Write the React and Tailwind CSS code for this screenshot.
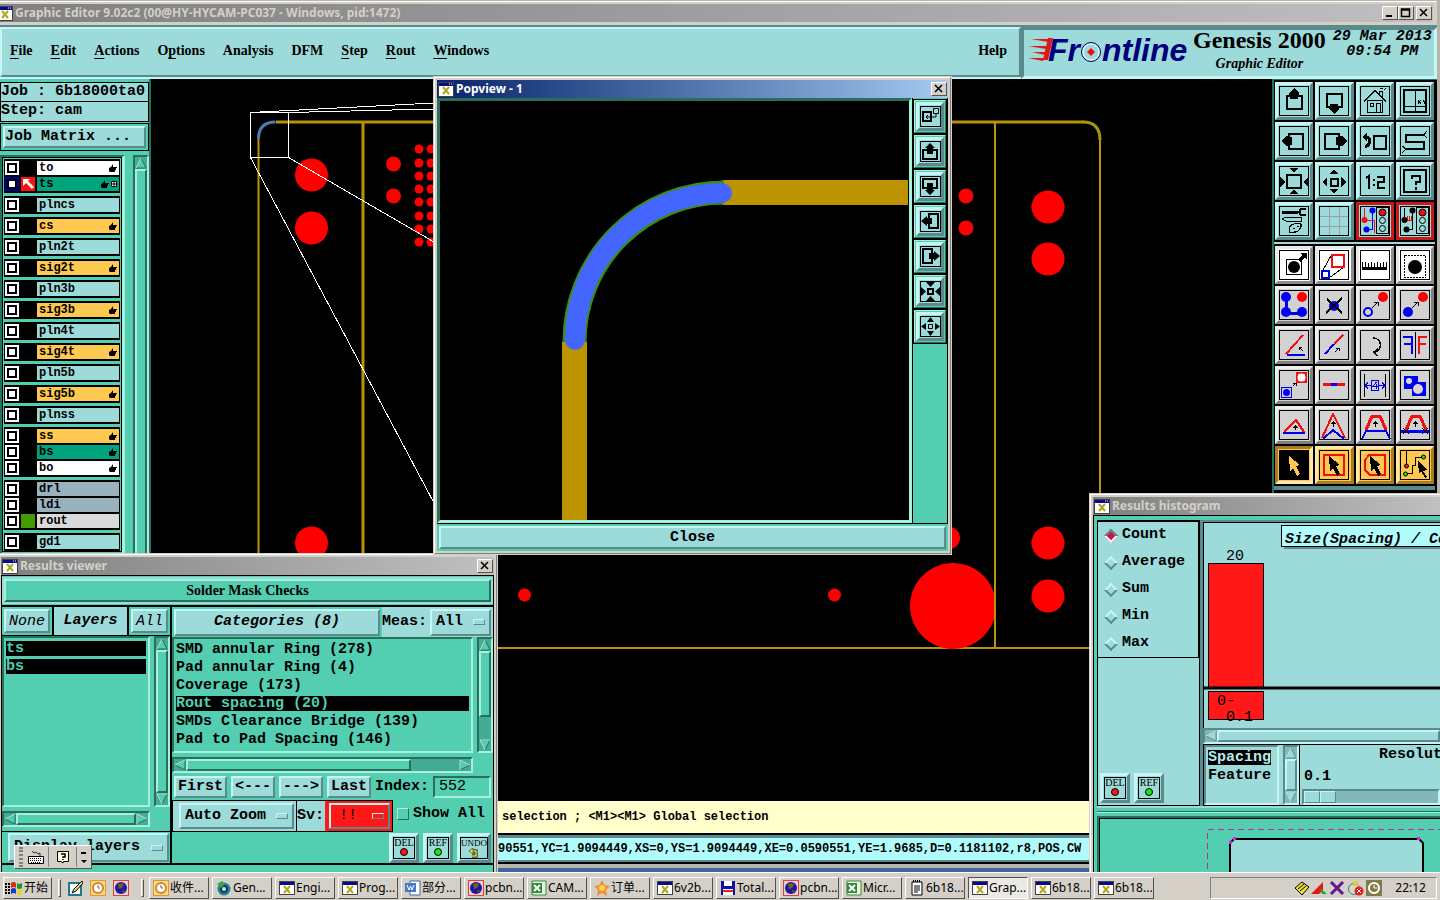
import clsx from 'clsx';

const INK = '#000';
const BLUE = '#0000f0';
const RED = '#f01010';

const raised = 'border-t-[#c6f5f5] border-l-[#c6f5f5] border-b-[#5a8a8c] border-r-[#5a8a8c]';
const raisedGreen = 'border-t-[#a8f0dc] border-l-[#a8f0dc] border-b-[#2a6e5e] border-r-[#2a6e5e]';
const sunkenGreen = 'border-t-[#2a6e5e] border-l-[#2a6e5e] border-b-[#a8f0dc] border-r-[#a8f0dc]';
const sunkenCyan = 'border-t-[#5a8a8c] border-l-[#5a8a8c] border-b-[#c6f5f5] border-r-[#c6f5f5]';
const raisedGray = 'border-t-white border-l-white border-b-[#55524c] border-r-[#55524c]';

/* ---------- toolbox drawings, all on a 38x38 grid ---------- */

const Traffic = () => (
  <g fill="none" stroke={INK}>
    <rect x="20.5" y="5.5" width="12" height="26" />
    <circle cx="26.5" cy="10.5" r="3.5" fill={RED} />
    <circle cx="26.5" cy="18.5" r="3" />
    <circle cx="26.5" cy="26.5" r="3" />
  </g>
);

const Pointer = ({ fill = INK }) => (
  <path d="M14 10l11 9-4 1 4 8-3 2-4-8-3 3z" fill={fill} />
);

const icons = {
  up: (
    <>
      <path d="M12 14h15v13h-15z" fill="none" stroke={INK} strokeWidth="2" />
      <path d="M19 6l5 5v2h-1v4h-8v-4h-1v-2z" />
    </>
  ),
  down: (
    <>
      <path d="M12 12h15v13h-15z" fill="none" stroke={INK} strokeWidth="2" />
      <path d="M19 32l5-5v-2h-1v-3h-8v3h-1v2z" />
    </>
  ),
  home: (
    <g fill="none" stroke={INK}>
      <path d="M8 19.5l2-2L19 8.5l9 9 2 2M11.5 19v11.5h15V19M11 18.5h16" strokeWidth="1.5" />
      <path d="M14.5 21.5h3v3h-3zM20.5 30v-8.5h4V30M23.5 12V9.5h3V15M24 7l3-1M28 8l2-2" />
    </g>
  ),
  xy: (
    <g fill="none" stroke={INK}>
      <path d="M8 8h22v22H8z" strokeWidth="2" />
      <path d="M19.5 8v22M8 24.5h22M22 18l3 4m0-4l-3 4M27 18l1.5 2 1.5-2M28.5 20v2" />
    </g>
  ),
  left: (
    <>
      <path d="M14 12h14v15H14z" fill="none" stroke={INK} strokeWidth="2" />
      <path d="M6 19l5-5h2v1h4v8h-4v1h-2z" />
    </>
  ),
  right: (
    <>
      <path d="M10 12h14v15H10z" fill="none" stroke={INK} strokeWidth="2" />
      <path d="M32 19l-5-5h-2v1h-4v8h4v1h2z" />
    </>
  ),
  back: (
    <g fill="none" stroke={INK}>
      <path d="M18 14h12v13H18z" strokeWidth="2" />
      <path d="M9 15c6-1 6 8 0 10" strokeWidth="3" />
      <path d="M6 15l5-4v8z" fill={INK} stroke="none" />
    </g>
  ),
  snake: (
    <g fill="none" stroke={INK}>
      <path d="M28 13H10v7h18v7H9" strokeWidth="2" />
      <path d="M28 13l3-4M28 13l3 3M10 27l-4-3M10 27l-4 4" />
    </g>
  ),
  outward: (
    <>
      <path d="M12 13h14v13H12z" fill="none" stroke={INK} strokeWidth="2" />
      <path d="M14 6h10l-5 4zM14 32h10l-5-4zM5 15v10l5-5zM33 15v10l-4-5z" />
    </>
  ),
  spread: (
    <>
      <path d="M15.5 16.5h7v7h-7z" fill="none" stroke={INK} strokeWidth="2" />
      <path d="M14 12h10l-5-4zM14 27h10l-5 4zM12 15v10l-5-5zM26 15v10l5-5z" />
    </>
  ),
  ratio: (
    <path
      d="M10 16l3-2v13M18 17v2M18 22v2M21 15h7v5h-6v6h7"
      fill="none"
      stroke={INK}
      strokeWidth="2"
    />
  ),
  help: (
    <g fill="none" stroke={INK} strokeWidth="2">
      <path d="M8 8h22v22H8z" />
      <path d="M16 17v-3h8v6h-4v3M20 25v3" />
    </g>
  ),
  tools: (
    <g fill="none" stroke={INK}>
      <path d="M7 10h16" strokeWidth="3" />
      <path d="M31 7h-5l-2 3 2 3h5" strokeWidth="2" />
      <path d="M7 17l4-2h15v4H11z" />
      <path d="M14 28c0-6 6-7 12-6 1 4-3 9-9 9-2 0-3-1-3-3z" />
      <path d="M18 26h2M22 24h2M19 29h2" />
    </g>
  ),
  grid: (
    <path d="M14.5 5v28M24.5 5v28M5 14.5h28M5 24.5h28" stroke="#a09aa8" fill="none" />
  ),
  netBlue: (
    <>
      <path d="M8.5 6v12h10v13" stroke={RED} fill="none" />
      <path d="M16.5 8v19h-6" stroke={BLUE} fill="none" />
      <circle cx="8.5" cy="18" r="3" fill={RED} />
      <circle cx="16.5" cy="8.5" r="3" fill={BLUE} />
      <circle cx="10.5" cy="27.5" r="3" fill={BLUE} />
      <Traffic />
    </>
  ),
  netBlack: (
    <>
      <path d="M8.5 6v12M16.5 8v19h-6" stroke={INK} fill="none" />
      <path d="M10 18h6M11.5 14v4M13.5 14v4M15.5 14v4" stroke={RED} fill="none" />
      <circle cx="8.5" cy="18" r="3" />
      <circle cx="16.5" cy="8.5" r="3" />
      <circle cx="10.5" cy="27.5" r="3" />
      <Traffic />
    </>
  ),
  padArrow: (
    <>
      <rect x="11.5" y="13.5" width="15" height="15" fill="none" stroke={INK} />
      <circle cx="19" cy="21" r="6" />
      <path d="M24 15l5-5" stroke={INK} strokeWidth="3" />
      <path d="M25 7h7v7z" />
    </>
  ),
  scale: (
    <g fill="none">
      <path d="M8 24l9-16M14 32l15-11" stroke={INK} />
      <path d="M17 9h12v12H17z" stroke={RED} strokeWidth="2" />
      <path d="M7 25h7v7H7z" stroke={BLUE} strokeWidth="2" />
    </g>
  ),
  ruler: (
    <path d="M6 24V16h1v5h2v-5h1v5h2v-4h1v4h2v-5h1v5h2v-4h1v4h2v-5h1v5h2v-4h1v4h2v-5h1v5h2v-5h1v8z" />
  ),
  dashPad: (
    <>
      <rect x="8.5" y="9.5" width="21" height="22" fill="none" stroke={INK} strokeDasharray="2 1" />
      <circle cx="19" cy="21" r="7" />
    </>
  ),
  link: (
    <>
      <path d="M11 11v16h16" stroke={BLUE} strokeWidth="3" fill="none" />
      <circle cx="11" cy="11" r="5" fill={BLUE} />
      <circle cx="11" cy="26" r="5" fill={BLUE} />
      <circle cx="27" cy="26" r="5" fill={BLUE} />
      <circle cx="27" cy="11" r="5" fill="#ff0000" />
    </>
  ),
  remove: (
    <>
      <circle cx="19" cy="20" r="5" fill={BLUE} />
      <path d="M12 13l15 14M27 12L11 27" stroke={INK} strokeWidth="2" />
    </>
  ),
  moveRing: (
    <>
      <circle cx="12" cy="26" r="4" fill="none" stroke={BLUE} strokeWidth="2" />
      <circle cx="27" cy="11" r="5" fill="#ff0000" />
      <path d="M16 22l6-6m-4 0h4v4" stroke={INK} fill="none" />
    </>
  ),
  moveDot: (
    <>
      <circle cx="12" cy="26" r="5" fill={BLUE} />
      <circle cx="27" cy="11" r="5" fill="#ff0000" />
      <path d="M16 22l6-6m-4 0h4v4" stroke={INK} fill="none" />
    </>
  ),
  angle: (
    <g fill="none" strokeWidth="2">
      <path d="M11 28L28 9" stroke={RED} />
      <path d="M12 29h18" stroke={BLUE} />
      <path d="M28 25l-4-4m0 3v-3h3" stroke={INK} strokeWidth="1" />
    </g>
  ),
  slope: (
    <g fill="none" strokeWidth="2">
      <path d="M19 18l9-9" stroke={RED} />
      <path d="M10 28l9-10" stroke={BLUE} />
      <path d="M20 26l4-4m-3 0h3v3" stroke={INK} strokeWidth="1" />
    </g>
  ),
  rotate: (
    <path d="M17 12c10 0 9 13 2 14m3-3l-4 3 3 4" stroke={INK} strokeWidth="1.5" fill="none" />
  ),
  mirror: (
    <g fill="none" strokeWidth="2">
      <path d="M19.5 6v26" stroke={INK} strokeWidth="1" />
      <path d="M7 11h9v17M8 18h8" stroke={BLUE} />
      <path d="M31 11h-8v17M30 18h-7" stroke={RED} />
    </g>
  ),
  copyPad: (
    <g fill="none">
      <path d="M22 7h9v9h-9z" stroke={RED} strokeWidth="2" />
      <circle cx="26.5" cy="11.5" r="4" fill="#fff" />
      <path d="M6.5 21.5h10v10h-10z" stroke={BLUE} />
      <circle cx="11.5" cy="26.5" r="3.5" fill={BLUE} />
      <path d="M18 20l3-3m-3 0h3v3" stroke={INK} />
    </g>
  ),
  segment: (
    <>
      <path d="M8 18.5h22" stroke={RED} strokeWidth="3" />
      <path d="M16 18.5h6" stroke={BLUE} strokeWidth="3" />
    </>
  ),
  measure: (
    <g fill="none">
      <path d="M8.5 8v23M29.5 8v23" stroke={INK} />
      <path d="M9 19.5h6m7 0h7M12 16.5l-3 3 3 3M26 16.5l3 3-3 3M15.5 14.5h7v10h-7zM20.5 16l-3 4h4m-1-2v5" stroke={BLUE} />
    </g>
  ),
  merge: (
    <>
      <path d="M8 10h14v6h8v14H16v-7H8z" fill={BLUE} />
      <circle cx="13" cy="15" r="3" fill="#d8d8d8" />
      <circle cx="22" cy="23" r="5" fill="#d8d8d8" />
    </>
  ),
  tri: (
    <g fill="none" strokeWidth="2">
      <path d="M9 26l12-12 8 12" stroke={RED} />
      <path d="M8 27h22" stroke={BLUE} />
      <path d="M20.5 24v-4m-2 2l2-2 2 2" stroke={INK} strokeWidth="1" />
    </g>
  ),
  peak: (
    <g fill="none" strokeWidth="2">
      <path d="M7 32L18 8l12 24" stroke={RED} />
      <path d="M8 33l10-9 11 9" stroke={BLUE} />
      <path d="M18.5 21v-5m-2 2l2-2 2 2" stroke={INK} strokeWidth="1.5" />
    </g>
  ),
  trap: (
    <g fill="none" strokeWidth="2">
      <path d="M10 24l6-14h8l6 14" stroke={RED} strokeWidth="3" />
      <path d="M6 33l4-8h20l4 8" stroke={BLUE} />
      <path d="M19.5 21v-5m-2 2l2-2 2 2" stroke={INK} strokeWidth="1.5" />
    </g>
  ),
  trapCut: (
    <g fill="none" strokeWidth="2">
      <path d="M10 24l6-14h8l6 14" stroke={RED} strokeWidth="3" />
      <path d="M5 25h28" stroke={BLUE} strokeWidth="3" />
      <path d="M19.5 21v-5m-2 2l2-2 2 2" stroke={INK} strokeWidth="1.5" />
      <path d="M7 22l6 6m0-6l-6 6M26 22l6 6m0-6l-6 6" stroke={INK} strokeWidth="1" />
    </g>
  ),
  pick: (
    <>
      <rect x="5" y="5" width="28" height="28" />
      <Pointer fill="#ffc850" />
    </>
  ),
  pickRect: (
    <>
      <path d="M9 9h20v20H9z" fill="none" stroke={RED} strokeWidth="2" />
      <Pointer />
    </>
  ),
  pickPoly: (
    <>
      <path d="M13 9h16v20H14l-5-5V14z" fill="none" stroke={RED} strokeWidth="2" />
      <Pointer />
    </>
  ),
  pickNet: (
    <>
      <path d="M10.5 5v15M10 27.5h6V19h3v-8h8" fill="none" stroke={INK} />
      <circle cx="10.5" cy="20" r="2" fill="#e03010" stroke={INK} />
      <circle cx="9.5" cy="28" r="2" fill="#20e020" stroke={INK} />
      <circle cx="27.5" cy="11" r="2" fill="#20e020" stroke={INK} />
      <path d="M22 15l9 9-4 1 4 6-2 1-4-7-2 3z" />
    </>
  ),
};

const tones = {
  teal: 'bg-[#9ddada] border-t-[#c6f5f5] border-l-[#c6f5f5] border-b-[#5a8a8c] border-r-[#5a8a8c]',
  red: 'bg-[#9ddada] border-[#c81818]',
  white: 'bg-white border-t-[#e8e8e8] border-l-[#e8e8e8] border-b-[#8c8c8c] border-r-[#8c8c8c]',
  gray: 'bg-[#d2d2d2] border-t-[#efefef] border-l-[#efefef] border-b-[#808080] border-r-[#808080]',
  gold: 'bg-[#ffc850] border-t-[#ffe8b0] border-l-[#ffe8b0] border-b-[#a87c20] border-r-[#a87c20]',
  goldDown: 'bg-[#ffc850] border-t-[#a87c20] border-l-[#a87c20] border-b-[#ffe8b0] border-r-[#ffe8b0]',
};

const viewTools = [
  ['up', 'teal'], ['down', 'teal'], ['home', 'teal'], ['xy', 'teal'],
  ['left', 'teal'], ['right', 'teal'], ['back', 'teal'], ['snake', 'teal'],
  ['outward', 'teal'], ['spread', 'teal'], ['ratio', 'teal'], ['help', 'teal'],
  ['tools', 'teal'], ['grid', 'teal'], ['netBlue', 'red'], ['netBlack', 'red'],
];

const editTools = [
  ['padArrow', 'white'], ['scale', 'white'], ['ruler', 'white'], ['dashPad', 'white'],
  ['link', 'gray'], ['remove', 'gray'], ['moveRing', 'gray'], ['moveDot', 'gray'],
  ['angle', 'gray'], ['slope', 'gray'], ['rotate', 'gray'], ['mirror', 'gray'],
  ['copyPad', 'gray'], ['segment', 'gray'], ['measure', 'gray'], ['merge', 'gray'],
  ['tri', 'gray'], ['peak', 'gray'], ['trap', 'gray'], ['trapCut', 'gray'],
  ['pick', 'goldDown'], ['pickRect', 'gold'], ['pickPoly', 'gold'], ['pickNet', 'gold'],
];

function ToolGrid({ tools }) {
  return (
    <div className="grid grid-cols-4 gap-0.5 bg-black p-px">
      {tools.map(([name, tone]) => (
        <button key={name} aria-label={name} className={clsx('h-[38px] border-3', tones[tone])}>
          <svg viewBox="3 3 32 32" className="size-8 [&_circle]:[shape-rendering:auto]" shapeRendering="crispEdges">
            <rect x="4.5" y="4.5" width="29" height="29" fill="none" stroke={INK} />
            {icons[name]}
          </svg>
        </button>
      ))}
    </div>
  );
}

/* ---------- shared window parts ---------- */

function AppIcon() {
  return (
    <svg viewBox="0 0 16 15" className="h-[15px] w-4 shrink-0">
      <rect width="16" height="15" fill="#404040" />
      <rect x="1" y="1" width="14" height="3" fill="#0a0a8c" />
      <path d="M11 2h1M13 2h1" stroke="#fff" />
      <rect x="1" y="4" width="14" height="10" fill="#fff" />
      <path d="M5 5l6 7M11 5l-6 7" stroke="#b0a818" strokeWidth="2" />
    </svg>
  );
}

function WinButton({ kind }) {
  const paths = {
    min: 'M3 9h6',
    max: 'M2.5 2v7.5h8V2zM2 3h9',
    close: 'M3 2l7 7M10 2l-7 7',
  };
  return (
    <button aria-label={kind} className={clsx('h-[14px] w-4 border bg-[#d4d0c8]', raisedGray)}>
      <svg viewBox="0 0 14 12" className="h-3 w-[14px]">
        <path d={paths[kind]} stroke={INK} strokeWidth={kind === 'min' ? 2 : 1.5} fill="none" />
      </svg>
    </button>
  );
}

function TitleBar({ title, active, children }) {
  return (
    <div
      className={clsx(
        'flex h-[18px] shrink-0 items-center gap-0.5 bg-linear-to-r px-px font-["Noto_Sans",sans-serif] text-[12px] leading-4 font-bold',
        active ? 'from-[#0a246a] to-[#a6caf0] text-white' : 'from-[#808080] to-[#c0c0c0] text-[#d4d0c8]'
      )}
    >
      <AppIcon />
      <h2 className="flex-1 whitespace-nowrap">{title}</h2>
      {children}
    </div>
  );
}

function Win({ className, title, active, closable = true, children }) {
  return (
    <section className={clsx('absolute flex flex-col border border-[#d4d0c8] bg-[#d4d0c8]', className)}>
      <div className="flex min-h-0 flex-1 flex-col border border-t-white border-r-[#808080] border-b-[#808080] border-l-white p-0.5">
        <TitleBar title={title} active={active}>{closable && <WinButton kind="close" />}</TitleBar>
        {children}
      </div>
    </section>
  );
}

const arrows = { up: 'M6 1l5 10H1z', down: 'M6 11l5-10H1z', left: 'M1 6l10-5v10z', right: 'M11 6L1 1v10z' };

function Arrow({ dir, cyan }) {
  return (
    <svg viewBox="0 0 12 12" className="size-3 shrink-0">
      <path d={arrows[dir]} fill={cyan ? '#9ddada' : '#53ceb0'} stroke={cyan ? '#5a8a8c' : '#2a6e5e'} />
      <path
        d={{ up: 'M1 11L6 1', down: 'M11 1H1l5 10', left: 'M1 6l10-5', right: 'M1 11V1l10 5' }[dir]}
        stroke="#c6f5ea"
        fill="none"
      />
    </svg>
  );
}

// thumb is the Tailwind size class of the slider along the bar
function ScrollBar({ vertical, cyan, thumb = 'flex-1', ends = true, className }) {
  return (
    <div
      className={clsx(
        'flex shrink-0 border-2',
        vertical ? 'w-4 flex-col' : 'h-4',
        cyan ? 'bg-[#84b8b8]' : 'bg-[#44ac94]',
        cyan ? sunkenCyan : sunkenGreen,
        className
      )}
    >
      <Arrow dir={vertical ? 'up' : 'left'} cyan={cyan} />
      <div className={clsx('border-2', thumb, cyan ? 'bg-[#9ddada]' : 'bg-[#53ceb0]', cyan ? raised : raisedGreen)} />
      {thumb !== 'flex-1' && <div className="flex-1" />}
      {ends && <Arrow dir={vertical ? 'down' : 'right'} cyan={cyan} />}
    </div>
  );
}

function Btn({ className, children }) {
  return (
    <button className={clsx('border-2 bg-[#9ddada] text-center', raised, className)}>{children}</button>
  );
}

function OptionMenu({ label, value, className, tone = 'bg-[#9ddada]', pad = 'pl-1' }) {
  return (
    <div className={clsx('relative flex items-center border-2', raised, tone, className)}>
      <select aria-label={label} className={clsx('w-full appearance-none bg-transparent outline-none', pad)}>
        <option>{value}</option>
      </select>
      <span className={clsx('pointer-events-none absolute right-1 h-1.5 w-3 border', raised)} />
    </div>
  );
}

function LampButton({ text, lamp }) {
  return (
    <button
      className={clsx(
        'flex h-[30px] items-center justify-center border-3 bg-[#9ddada] font-["Liberation_Serif",serif] font-normal',
        text.length > 3 ? 'w-[34px]' : 'w-[30px]',
        raised
      )}
    >
      <span
        className={clsx(
          'flex h-[22px] shrink-0 flex-col items-center border border-black text-[10px] leading-[10px]',
          text.length > 3 ? 'w-[28px]' : 'w-[22px]'
        )}
      >
        <span className={clsx(text.length > 3 && 'text-[9px]')}>{text}</span>
        {lamp === 'undo' ? (
          <svg viewBox="0 0 10 10" className="size-2.5">
            <path d="M3 3h4v5H3" fill="none" stroke={INK} strokeWidth="3" />
            <path d="M3 3h4v5H3" fill="none" stroke="#f0e840" strokeWidth="1.5" />
            <path d="M0 3l4-3v6z" fill="#f0e840" stroke={INK} strokeWidth=".5" />
          </svg>
        ) : (
          <svg viewBox="0 0 8 8" className="size-2">
            <circle cx="4" cy="4" r="3.5" fill={lamp} stroke={INK} />
          </svg>
        )}
      </span>
    </button>
  );
}

/* ---------- main window ---------- */

// [before, underlined, after]
const menus = [
  ['', 'F', 'ile'], ['', 'E', 'dit'], ['', 'A', 'ctions'], ['O', 'p', 'tions'], ['Analysis', '', ''],
  ['DFM', '', ''], ['', 'S', 'tep'], ['', 'R', 'out'], ['', 'W', 'indows'],
];

function Logo() {
  return (
    <svg viewBox="0 0 162 40" className="h-10 w-[162px] shrink-0 overflow-visible">
      <path d="M3 9h18l-1 3zM0 16h19l-1 3zM4 22h14l-1 3zM0 28h16l-1 3zM20 8h5l-5 22h-5z" fill="#e01818" />
      <g fill="#00007c" fontFamily="Liberation Sans, sans-serif" fontSize="32" fontWeight="bold" fontStyle="italic">
        <text x="20" y="31">Fr</text>
        <text x="74" y="31">ntline</text>
      </g>
      <circle cx="63" cy="22" r="9.5" fill="#9ddada" stroke="#00007c" />
      <circle cx="63" cy="22" r="8" fill="none" stroke="#fff" />
      <path d="M63 18l4 4-4 4-4-4z" fill="#f01010" />
    </svg>
  );
}

function MenuBar() {
  return (
    <header className='flex h-[54px] shrink-0 border-t-2 border-[#5a8a8c] bg-[#9ddada] font-["Liberation_Serif",serif] text-[14px] font-bold'>
      <div className="flex flex-1 border-b-2 border-[#c6f5f5]">
        <nav className={clsx('flex flex-1 items-center gap-[18px] border-2 pr-3 pb-1 pl-2', raised)}>
          {menus.map(([a, b, c]) => (
            <button key={a + b + c} className="whitespace-nowrap">
              {a}<span className="underline underline-offset-3">{b}</span>{c}
            </button>
          ))}
          <button className="ml-auto">Help</button>
        </nav>
      </div>
      <div className={clsx('flex w-[416px] gap-[3px] border-3 pl-1', sunkenCyan)}>
        <div className="flex items-center pb-1.5"><Logo /></div>
        <div className="flex flex-col items-center">
          <h1 className="text-[24px] leading-5 font-bold whitespace-nowrap">Genesis 2000</h1>
          <p className="leading-7 italic">Graphic Editor</p>
        </div>
        <div className='ml-1 flex flex-col items-center font-["Liberation_Mono",monospace] text-[15px] leading-4 whitespace-nowrap italic'>
          <span className="leading-[14px]">29 Mar 2013</span>
          <span>09:54 PM</span>
        </div>
      </div>
    </header>
  );
}

const layerTones = {
  white: 'bg-white',
  green: 'bg-[#00a47c]',
  cyan: 'bg-[#9ddada]',
  gold: 'bg-[#ffc850]',
  slate: 'bg-[#9ab2be]',
  light: 'bg-[#dadada]',
};

const layerGroups = [
  [['to', 'white', true], ['ts', 'green', true]],
  [['plncs', 'cyan']],
  [['cs', 'gold', true]],
  [['pln2t', 'cyan']],
  [['sig2t', 'gold', true]],
  [['pln3b', 'cyan']],
  [['sig3b', 'gold', true]],
  [['pln4t', 'cyan']],
  [['sig4t', 'gold', true]],
  [['pln5b', 'cyan']],
  [['sig5b', 'gold', true]],
  [['plnss', 'cyan']],
  [['ss', 'gold', true], ['bs', 'green', true], ['bo', 'white', true]],
  [['drl', 'slate'], ['ldi', 'slate'], ['rout', 'light']],
  [['gd1', 'cyan']],
];

function LayerRow({ name, tone, marked }) {
  const current = name === 'ts';
  return (
    <div className="flex h-4 items-center gap-0.5">
      <input
        type="checkbox"
        aria-label={name}
        className={clsx(
          'size-3.5 shrink-0 appearance-none border-2 bg-white shadow-[inset_0_0_0_2px_black]',
          current ? 'border-[#0000a0]' : 'border-white'
        )}
      />
      <span className={clsx('size-3.5 shrink-0', current && 'bg-[#ff1010]', name === 'rout' && 'bg-[#449a00]')}>
        {current && (
          <svg viewBox="0 0 14 14" className="size-3.5">
            <path d="M2 2h7L7 4l6 6-2 2-6-6-3 3z" fill="#fff" />
          </svg>
        )}
      </span>
      <span className={clsx('flex h-3.5 flex-1 items-center gap-0.5 px-0.5', layerTones[tone])}>
        <span className="flex-1 text-[12px] leading-3">{name}</span>
        {marked && (
          <svg viewBox="0 0 8 8" className="size-2">
            <path d="M0 4l2-1 2-3v3h4v1H7v2H6v2H1L0 7z" />
          </svg>
        )}
        {current && (
          <svg viewBox="0 0 6 6" className="size-1.5">
            <path d="M0 0h6v6H0z" fill="#fff" />
            <path d="M.5.5h5v5h-5zM3 0v6M0 3h6" stroke={INK} fill="none" />
          </svg>
        )}
      </span>
    </div>
  );
}

function JobPanel() {
  return (
    <aside className='flex w-[151px] shrink-0 flex-col overflow-hidden border-r-2 border-[#2a6e5e] bg-[#53ceb0] pt-[3px] font-["Liberation_Mono",monospace] text-[15px] font-bold'>
      <p className="h-5 border border-black bg-[#9ddada] leading-[18px] whitespace-pre">Job : 6b18000ta0</p>
      <p className="h-5 border-x border-b border-black bg-[#9ddada] leading-[18px]">Step: cam</p>
      <div className="mt-px flex h-7 border border-black p-0.5">
        <Btn className="flex-1 text-left leading-4">Job Matrix ...</Btn>
      </div>
      <div className="mt-1 flex min-h-0 flex-1 gap-2">
        <div className={clsx('flex-1 overflow-hidden border-r-3 border-t-2 border-l-2', sunkenGreen)}>
          <ul className="flex flex-col gap-[3px] border border-black px-px pt-px">
            {layerGroups.map((group) => (
              <li key={group[0][0]} className="bg-black p-px">
                {group.map(([name, tone, marked]) => (
                  <LayerRow key={name} name={name} tone={tone} marked={marked} />
                ))}
              </li>
            ))}
          </ul>
        </div>
        <ScrollBar vertical />
      </div>
    </aside>
  );
}

const bigPads = [[311.5, 175], [311.5, 228], [311.5, 543], [1048, 207], [1048, 259], [1048, 543], [1048, 596]];
const midPads = [[393.5, 164], [393.5, 196], [966, 196], [966, 228]];
const tinyRows = [149, 163, 176, 189, 202, 216, 229, 242];

function Board() {
  return (
    <svg viewBox="151 79 1121 722" className="h-[722px] w-[1121px] max-w-none">
      <g fill="none" stroke="#b8940c" strokeWidth="2">
        <path d="M258.5 139V648H1100V139" />
        <path d="M276 122H1084" strokeWidth="3" />
        <path d="M363 122v526" strokeWidth="3" />
        <path d="M995 122v526" />
        <path d="M1083 122q17 0 17 18" stroke="#a0980f" strokeWidth="3" />
        <path d="M258.5 139q0-17 17-17" stroke="#4a7cb0" strokeWidth="3" />
      </g>
      <g fill="#ff0000">
        {bigPads.map(([x, y]) => <circle key={`${x}-${y}`} cx={x} cy={y} r="16.5" />)}
        {midPads.map(([x, y]) => <circle key={`${x}-${y}`} cx={x} cy={y} r="7.5" />)}
        {tinyRows.map((y) => (
          <g key={y}>
            <circle cx="419" cy={y} r="4.5" />
            <circle cx="431" cy={y} r="4.5" />
          </g>
        ))}
        <circle cx="524.5" cy="595" r="6.5" />
        <circle cx="834.5" cy="595" r="6.5" />
        <circle cx="949" cy="538" r="11" />
        <path d="M994 593v26A43 43 0 1 1 994 593z" />
      </g>
      <g fill="none" stroke="#fff" shapeRendering="crispEdges">
        <path d="M250.5 112.5h38v45h-38zM250.5 112.5L434 103M288.5 112.5L434 109M250.5 157.5L434 503M288.5 157.5L434 242" />
      </g>
    </svg>
  );
}

function MainWindow() {
  return (
    <div className="flex h-full flex-col border-t border-r-3 border-b-4 border-[#b8b4ac] bg-[#d4d0c8]">
      <div className="h-6 shrink-0 border-t border-white pt-0.5 pr-1">
        <div className="-ml-1">
          <TitleBar title="Graphic Editor 9.02c2 (00@HY-HYCAM-PC037 - Windows, pid:1472)">
            <div className="flex gap-0.5">
              <div className="flex"><WinButton kind="min" /><WinButton kind="max" /></div>
              <WinButton kind="close" />
            </div>
          </TitleBar>
        </div>
      </div>
      <MenuBar />
      <div className="flex min-h-0 flex-1">
        <JobPanel />
        <main className="min-w-0 flex-1 overflow-hidden bg-black"><Board /></main>
        <aside className="flex w-[165px] shrink-0 flex-col border-t border-l-2 border-[#2a6e5e] bg-black pt-px pr-0.5">
          <ToolGrid tools={viewTools} />
          <div className="my-px h-0.5 bg-[#9ddada]" />
          <ToolGrid tools={editTools} />
          <div className="mt-px h-1 bg-[#5a8a8c]" />
        </aside>
      </div>
      <footer className='shrink-0 font-["Liberation_Mono",monospace] text-[12px] font-bold'>
        <p className="h-8 overflow-hidden bg-[#ffffcc] pl-[502px] leading-8 whitespace-nowrap">
          selection ; &lt;M1&gt;&lt;M1&gt; Global selection
        </p>
        <p className="h-[31px] overflow-hidden border-y-2 border-black bg-[#b0fcfc] pl-[498px] leading-7 whitespace-nowrap shadow-[inset_0_3px_0_#5a8a8c,inset_0_-2px_0_#5a8a8c]">
          90551,YC=1.9094449,XS=0,YS=1.9094449,XE=0.0590551,YE=1.9685,D=0.1181102,r8,POS,CW
        </p>
      </footer>
    </div>
  );
}

/* ---------- popview ---------- */

const popIcons = {
  zoom: (
    <g fill="none" stroke={INK}>
      <path d="M3 6h8v9H3z" strokeWidth="2" />
      <path d="M13.5 2.5h5v5h-5zM16 8v3H6m2-2l-2 2 2 2" />
    </g>
  ),
  up: <><path d="M3 9h14v9H3z" fill="none" stroke={INK} strokeWidth="2" /><path d="M10 2l5 5h-2v6H7V7H5z" /></>,
  down: <><path d="M3 3h14v9H3z" fill="none" stroke={INK} strokeWidth="2" /><path d="M10 19l5-5h-2V7H7v7H5z" /></>,
  left: <><path d="M9 3h9v14H9z" fill="none" stroke={INK} strokeWidth="2" /><path d="M1 10l6-5v2h5v6H7v2z" /></>,
  right: <><path d="M3 3h9v14H3z" fill="none" stroke={INK} strokeWidth="2" /><path d="M20 10l-6-5v2H9v6h5v2z" /></>,
  inward: (
    <>
      <path d="M8 8h5v5H8z" fill="none" stroke={INK} strokeWidth="2" />
      <path d="M6 1h9l-4.5 5zM6 20h9l-4.5-5zM1 6v9l5-4.5zM20 6v9l-5-4.5z" />
    </>
  ),
  outward: (
    <>
      <path d="M8.5 8.5h4v4h-4z" fill="none" stroke={INK} />
      <path d="M7 6h7l-3.5-5zM7 15h7l-3.5 5zM6 7v7l-5-3.5zM15 7v7l5-3.5z" />
    </>
  ),
};

function Popview() {
  return (
    <Win title="Popview - 1" active className="top-[76px] left-[433px] h-[479px] w-[519px]">
      <div className='flex min-h-0 flex-1 flex-col bg-[#53ceb0] font-["Liberation_Mono",monospace] text-[15px] font-bold'>
        <div className="flex min-h-0 flex-1">
          <div className={clsx('min-w-0 flex-1 overflow-hidden border-3 bg-black', sunkenGreen)}>
            <svg viewBox="440 101 469 420" className="h-[420px] w-[469px] max-w-none">
              <path d="M574.5 520V342M722 192.5H908" stroke="#bc9400" strokeWidth="25" fill="none" />
              <path d="M574.5 342A149.5 149.5 0 0 1 724 192.5" stroke="#3c8c14" strokeWidth="24" fill="none" />
              <path d="M575 340A147 147 0 0 1 722 193" stroke="#4466ff" strokeWidth="20" strokeLinecap="round" fill="none" />
            </svg>
          </div>
          <div className="flex w-9 shrink-0 flex-col gap-0.5 border-x border-black px-px pt-0.5">
            {Object.entries(popIcons).map(([name, icon]) => (
              <button key={name} aria-label={name} className="h-[33px] border border-t-[#a8f0dc] border-l-[#a8f0dc] border-r-[#2a6e5e] border-b-[#2a6e5e] p-px outline outline-black">
                <span className={clsx('flex h-full items-center justify-center border-3 bg-[#9ddada]', raised)}>
                  <svg viewBox="0 0 21 21" className="size-[21px]">
                    <rect x=".5" y=".5" width="20" height="20" fill="none" stroke={INK} />
                    {icon}
                  </svg>
                </span>
              </button>
            ))}
          </div>
        </div>
        <div className="flex h-7 shrink-0 border-t border-black p-0.5">
          <Btn className="flex-1 leading-5">Close</Btn>
        </div>
      </div>
    </Win>
  );
}

/* ---------- results viewer ---------- */

const categories = [
  'SMD annular Ring (278)',
  'Pad annular Ring (4)',
  'Coverage (173)',
  'Rout spacing (20)',
  'SMDs Clearance Bridge (139)',
  'Pad to Pad Spacing (146)',
];

function ResultsViewer() {
  return (
    <Win title="Results viewer" className="top-[553px] bottom-[-6px] left-[-3px] w-[501px]">
      <div className='flex min-h-0 flex-1 flex-col overflow-hidden border border-black bg-[#53ceb0] font-["Liberation_Mono",monospace] text-[15px] font-bold'>
        <h3 className='mt-px h-[27px] shrink-0 border-2 border-[#9ddada] font-["Liberation_Serif",serif] text-[14px]'>
          <span className={clsx('block h-full border-2 text-center leading-5', raisedGreen)}>Solder Mask Checks</span>
        </h3>
        <div className="mt-px flex h-[260px] shrink-0 border-y-2 border-black">
          <div className="flex w-[170px] shrink-0 flex-col border-r-2 border-black">
            <div className="flex h-[29px] shrink-0 border-b border-black italic">
              <div className="p-0.5"><Btn className="h-6 w-[46px] font-normal italic">None</Btn></div>
              <div className="flex-1 border-x-2 border-black bg-[#9ddada] text-center leading-7">Layers</div>
              <div className="p-0.5"><Btn className="h-6 w-[37px] font-normal italic">All</Btn></div>
            </div>
            <div className="flex flex-1 gap-1">
              <ul className={clsx('flex flex-1 flex-col gap-[3px] border-2 px-0.5 py-[3px] leading-[15px]', sunkenGreen)}>
                <li className="bg-black text-[#53ceb0]">ts</li>
                <li className="bg-black text-[#53ceb0]">bs</li>
              </ul>
              <ScrollBar vertical />
            </div>
            <div className="my-1 flex pr-5"><ScrollBar className="flex-1" /></div>
            <div className="h-8 shrink-0 border-t border-black p-px pl-1.5">
              <OptionMenu label="Layer display" value="Display layers" className="h-[29px]" />
            </div>
          </div>
          <div className="flex min-w-0 flex-1 flex-col">
            <div className="flex h-[30px] shrink-0">
              <div className="p-0.5"><Btn className="h-[27px] w-[206px] italic">Categories (8)</Btn></div>
              <div className="flex flex-1 items-center justify-between bg-[#9ddada]">
                <span>Meas:</span>
                <OptionMenu label="Meas" value="All" className="mr-0.5 h-[27px] w-[61px]" />
              </div>
            </div>
            <div className="flex h-[116px] shrink-0 gap-1">
              <ul className={clsx('flex flex-1 flex-col gap-[3px] border-2 px-0.5 py-[3px] leading-[15px] whitespace-nowrap', sunkenGreen)}>
                {categories.map((c, i) => (
                  <li key={c} className={clsx(i === 3 && 'bg-black text-[#53ceb0]')}>{c}</li>
                ))}
              </ul>
              <ScrollBar vertical thumb="h-[66px]" />
            </div>
            <div className="mt-1 flex pr-5"><ScrollBar className="flex-1" thumb="w-[225px]" /></div>
            <div className="flex h-[27px] shrink-0 items-center gap-1 px-0.5 leading-[18px]">
              <Btn className="w-[53px]">First</Btn>
              <Btn className="w-[44px]">&lt;---</Btn>
              <Btn className="w-[44px]">---&gt;</Btn>
              <Btn className="w-[44px]">Last</Btn>
              <label htmlFor="index">Index:</label>
              <input id="index" defaultValue="552" className={clsx('h-[22px] w-0 flex-1 border-2 pl-1 font-normal outline-none', sunkenGreen)} />
            </div>
            <div className="flex h-8 shrink-0">
              <div className="w-[125px] border border-black bg-[#9ddada] py-0.5 pr-0.5 pl-1.5">
                <OptionMenu label="Zoom mode" value="Auto Zoom" className="h-[26px]" />
              </div>
              <span className="w-7 border-y border-black bg-[#9ddada] leading-[30px]">Sv:</span>
              <div className="w-[68px] border border-l-0 border-black bg-[#ff1818] py-0.5 pr-0.5 pl-1">
                <OptionMenu label="Severity" value="!!" tone="bg-[#ff1818] font-normal" pad="pl-2" className="h-[26px]" />
              </div>
              <label className="flex h-7 items-center gap-1 pl-1">
                <input type="checkbox" className={clsx('size-3 appearance-none border', raisedGreen)} />
                Show All
              </label>
            </div>
            <div className="flex h-[34px] items-center justify-end gap-1 pr-0.5">
              <LampButton text="DEL" lamp="#f01818" />
              <LampButton text="REF" lamp="#18e818" />
              <LampButton text="UNDO" lamp="undo" />
            </div>
          </div>
        </div>
      </div>
    </Win>
  );
}

/* ---------- histogram ---------- */

function Histogram() {
  return (
    <Win title="Results histogram" closable={false} className="top-[493px] right-[-6px] bottom-[-6px] left-[1089px]">
      <div className='flex min-h-0 flex-1 flex-col overflow-hidden border-t border-l border-black bg-[#53ceb0] pt-1 pl-[3px] font-["Liberation_Mono",monospace] text-[15px] font-bold'>
        <div className="flex h-[288px] shrink-0 border-b-2 border-[#9ddada]">
          <div className="flex w-[103px] shrink-0 flex-col justify-between border border-black bg-[#9ddada]">
            <fieldset className="-mt-px -mr-px flex h-[138px] flex-col border-t-2 border-r-2 border-b border-black">
              {['Count', 'Average', 'Sum', 'Min', 'Max'].map((name, i) => (
                <label key={name} className="flex h-[27px] items-center gap-1.5 pl-2">
                  <input
                    type="radio"
                    name="stat"
                    defaultChecked={i === 0}
                    className="size-2.5 rotate-45 appearance-none border-2 border-t-[#c6f5f5] border-r-[#5a8a8c] border-b-[#5a8a8c] border-l-[#c6f5f5] checked:border-t-[#5a8a8c] checked:border-r-white checked:border-b-white checked:border-l-[#5a8a8c] checked:bg-[#d0104c]"
                  />
                  {name}
                </label>
              ))}
            </fieldset>
            <div className="flex gap-1 p-0.5">
              <LampButton text="DEL" lamp="#f01818" />
              <LampButton text="REF" lamp="#18e818" />
            </div>
          </div>
          <div className="flex min-w-0 flex-1 flex-col border-t-2 border-l-3 border-[#5a8a8c] bg-[#9ddada]">
            <svg className="h-[206px] w-full shrink-0 border-t border-l border-black">
              <g stroke={INK}>
                <path d="M80 24h400v2H80z" fill="#6a8a90" stroke="none" />
                <rect x="77.5" y="2.5" width="400" height="21" fill="#b0fcfc" />
                <rect x="4.5" y="40.5" width="55" height="124" fill="#ff1818" />
                <rect x="4.5" y="168.5" width="55" height="28" fill="#ff1818" />
                <path d="M0 165h600" strokeWidth="3" />
              </g>
              <text x="81" y="20" fontStyle="italic">Size(Spacing) / Count</text>
              <g fontWeight="normal">
                <text x="22" y="37">20</text>
                <text x="13" y="182">0-</text>
                <text x="22" y="198">0.1</text>
              </g>
            </svg>
            <ScrollBar cyan ends={false} />
            <div className="flex min-h-0 flex-1 border-y border-l border-black">
              <ul className={clsx('w-[75px] border-2 px-0.5 py-[3px] leading-[15px]', sunkenCyan)}>
                <li className="mb-[3px] w-[63px] overflow-hidden bg-black text-[#b8e8e8]">Spacing</li>
                <li>Feature</li>
              </ul>
              <ScrollBar vertical cyan className="ml-1" />
              <div className="flex min-w-0 flex-1 flex-col overflow-hidden border-l border-black whitespace-nowrap">
                <p className="pl-[79px] leading-5">Resolution</p>
                <p className="pl-1 leading-6">0.1</p>
                <div className={clsx('mx-0.5 flex h-4 border-2 bg-[#84b8b8]', sunkenCyan)}>
                  <div className={clsx('w-4 border bg-[#9ddada]', raised)} />
                  <div className={clsx('w-4 border bg-[#9ddada]', raised)} />
                </div>
              </div>
            </div>
          </div>
        </div>
        <div className="mt-[3px] border-y border-t-[#2a6e5e] border-b-[#a8f0dc]" />
        <div className="mt-[3px] min-h-0 flex-1 border-t-2 border-l-2 border-[#2a6e5e]">
          <svg className="h-full w-full border-t border-l border-black">
            <path d="M107.5 60V10.5H500" stroke="#c82890" strokeDasharray="6 4" fill="none" />
            <path d="M130 70V24l4-4h185l4 4v46" fill="#9ddada" stroke={INK} strokeWidth="2" />
            <path d="M129 22h3v3h-3zM133 18h3v3h-3zM317 18h3v3h-3z" fill="#e020e0" />
          </svg>
        </div>
      </div>
    </Win>
  );
}

/* ---------- taskbar ---------- */

const taskIcons = {
  app: <><path d="M0 1h16v14H0z" fill="#404040" /><path d="M1 2h14v3H1z" fill="#0a0a8c" /><path d="M1 5h14v9H1z" fill="#fff" /><path d="M5 6l6 7M11 6l-6 7" stroke="#b0a818" strokeWidth="2" /></>,
  clock: <><rect x=".5" y=".5" width="15" height="15" fill="#fbd890" stroke="#e09830" /><circle cx="8" cy="8" r="5" fill="#fff" stroke="#d08828" strokeWidth="2" /><path d="M8 5v3h2" stroke="#806020" fill="none" /></>,
  globe: <><rect x=".5" y=".5" width="15" height="15" fill="#e8d0d0" stroke="#e04040" /><circle cx="8" cy="8" r="6" fill="#1818a0" /><path d="M5 4l4-1 2 2-2 3-3 1zM9 10l3 1-2 2z" fill="#786018" /></>,
  gen: <><circle cx="8" cy="9" r="6.5" fill="#188888" /><circle cx="8" cy="9" r="3" fill="#f0f060" stroke="#1030a0" strokeWidth="2" /><path d="M1 4l5-3 3 3-4 4z" fill="#40a050" /></>,
  word: <><path d="M5 1h10v14H5z" fill="#fff" stroke="#3860b0" /><path d="M0 3h11v9H0z" fill="#4878c8" /><path d="M2 5l2 5 1.5-4L7 10l2-5" stroke="#fff" fill="none" /></>,
  excel: <><path d="M1 1h14v14H1z" fill="#e8f4e0" stroke="#388838" /><path d="M1 3h10v10H1z" fill="#2c8c3c" /><path d="M3 5l6 6M9 5l-6 6" stroke="#fff" strokeWidth="2" /></>,
  star: <><path d="M8 0l2.5 5L16 6l-4 4 1 6-5-3-5 3 1-6-4-4 5.5-1z" fill="#f09030" /><circle cx="8" cy="8" r="3" fill="#f8d060" /></>,
  disk: <><path d="M1 1h14v14H1z" fill="#1010a0" /><path d="M4 1h8v5H4zM3 9h10v6H3z" fill="#fff" /><path d="M3 10h10v2H3z" fill="#e02020" /></>,
  note: <><path d="M3 2h10v13H3z" fill="#fff" stroke={INK} /><path d="M4 1h8" stroke={INK} strokeDasharray="1 1" strokeWidth="2" /><path d="M5 6h6M5 8h6M5 10h6M5 12h4" stroke={INK} /></>,
  pen: <><path d="M2 3h12v12H2z" fill="#fff" stroke="#207888" strokeWidth="2" /><path d="M15 1L7 9l-2 4 4-2 7-8z" fill="#f0d890" stroke={INK} /></>,
};

function TaskIcon({ name }) {
  return <svg viewBox="0 0 16 16" className="size-4 shrink-0">{taskIcons[name]}</svg>;
}

const tasks = [
  ['clock', '收件...'], ['gen', 'Gen...'], ['app', 'Engi...'], ['app', 'Prog...'],
  ['word', '部分...'], ['globe', 'pcbn...'], ['excel', 'CAM...'], ['star', '订单...'],
  ['app', '6v2b...'], ['disk', 'Total...'], ['globe', 'pcbn...'], ['excel', 'Micr...'],
  ['note', '6b18...'], ['app', 'Grap...'], ['app', '6b18...'], ['app', '6b18...'],
];

function Taskbar() {
  return (
    <footer className='flex h-7 shrink-0 items-center border-t border-white bg-[#d4d0c8] px-[3px] pt-0.5 font-["Noto_Sans","Noto_Sans_CJK_SC",sans-serif] text-[12px] leading-4'>
      <button className={clsx('flex h-[22px] w-[49px] items-center gap-px border pl-px whitespace-nowrap', raisedGray)}>
        <svg viewBox="0 0 18 16" className="h-4 w-[18px] shrink-0">
          <path d="M0 4h5M0 7h5M0 10h5M0 13h5" stroke={INK} strokeWidth="2" strokeDasharray="2 1" />
          <path d="M6 3q3-2 5 0v5q-2-2-5 0z" fill="#e02818" />
          <path d="M12 3q2 2 5 0v5q-3 2-5 0z" fill="#189828" />
          <path d="M6 9q3-2 5 0v5q-2-2-5 0z" fill="#1838c8" />
          <path d="M12 9q2 2 5 0v5q-3 2-5 0z" fill="#f0d020" />
        </svg>
        开始
      </button>
      <div className={clsx('mx-1.5 h-[18px] w-[3px] border', raisedGray)} />
      <div className="flex gap-[7px]">
        <button aria-label="Show desktop"><TaskIcon name="pen" /></button>
        <button aria-label="Outlook"><TaskIcon name="clock" /></button>
        <button aria-label="Internet"><TaskIcon name="globe" /></button>
      </div>
      <div className={clsx('ml-3 mr-[5px] h-[18px] w-[3px] border', raisedGray)} />
      <div className="flex flex-1 gap-[3px]">
        {tasks.map(([icon, label], i) => (
          <button
            key={i}
            className={clsx(
              'flex h-[22px] w-[60px] items-center gap-px border pl-[3px] whitespace-nowrap',
              i === 13 ? 'border-t-[#55524c] border-r-white border-b-white border-l-[#55524c] bg-[#ebe9e5]' : raisedGray
            )}
          >
            <TaskIcon name={icon} />
            {label}
          </button>
        ))}
      </div>
      <div className="flex h-[22px] w-[227px] items-center gap-0.5 border border-t-[#808080] border-r-white border-b-white border-l-[#808080] pl-[83px]">
        <svg viewBox="0 0 88 16" className="h-4 w-[88px]">
          <path d="M1 8l7-6 7 5-7 8z" fill="#e8e040" stroke={INK} />
          <path d="M4 9l6-5M6 11l6-5" stroke={INK} />
          <path d="M17 14L29 2v8l-4 4z" fill="#e01818" />
          <path d="M26 8l7 6h-5z" fill="#18a828" />
          <path d="M37 2l12 12M49 2L37 14" stroke="#601890" strokeWidth="3" />
          <circle cx="60" cy="9" r="5.5" fill="#d8d8c0" stroke="#208888" />
          <path d="M59 1h5v5h-5z" fill="#e0c840" />
          <circle cx="65" cy="11" r="4.5" fill="#e02020" />
          <path d="M63 9l4 4m0-4l-4 4" stroke="#fff" />
          <path d="M72 0h16v16H72z" fill="#807c48" />
          <circle cx="80" cy="8" r="5" fill="none" stroke="#fff" strokeWidth="2" />
          <path d="M80 5v3h3" stroke="#fff" fill="none" />
        </svg>
        <time className="ml-auto pr-2.5">22:12</time>
      </div>
    </footer>
  );
}

function LanguageBar() {
  return (
    <div className={clsx('absolute bottom-[3px] left-[14px] flex h-6 w-[78px] items-center border bg-[#d4d0c8] pl-1', raisedGray)}>
      <span className="h-5 w-1 border-x-2 border-dotted border-[#808080]" />
      <button aria-label="Keyboard" className="flex h-5 w-[26px] items-center justify-center border-r border-[#808080]">
        <svg viewBox="0 0 16 14" className="h-3.5 w-4">
          <path d="M.5 6.5h15v7H.5z" fill="#fff" stroke={INK} />
          <path d="M2 8.5h12M2 10.5h12M3 12.5h10" stroke={INK} strokeDasharray="1 1" />
          <path d="M4 1l2 2 2-1 2 2 2-1v3" fill="none" stroke={INK} strokeWidth=".8" />
        </svg>
      </button>
      <button aria-label="Help" className="flex h-5 w-7 items-center justify-center border-r border-[#808080]">
        <svg viewBox="0 0 14 14" className="size-3.5">
          <path d="M1.5 1.5h11v10h-5L7 13l-2-1.5H1.5z" fill="#ffffe0" stroke={INK} />
          <path d="M5 4h4v3H7v1M7 9v1" stroke={INK} strokeWidth="1.5" fill="none" />
        </svg>
      </button>
      <svg viewBox="0 0 8 14" className="mx-auto h-3.5 w-2">
        <path d="M1 2h5v2H1zM1 10h6l-3 3z" />
      </svg>
    </div>
  );
}

export default function App() {
  return (
    <div className="flex h-screen flex-col overflow-hidden bg-[#3f679b] text-black">
      <div className="relative min-h-0 flex-1 overflow-hidden pb-1">
        <MainWindow />
        <ResultsViewer />
        <Popview />
        <Histogram />
        <LanguageBar />
      </div>
      <Taskbar />
    </div>
  );
}
